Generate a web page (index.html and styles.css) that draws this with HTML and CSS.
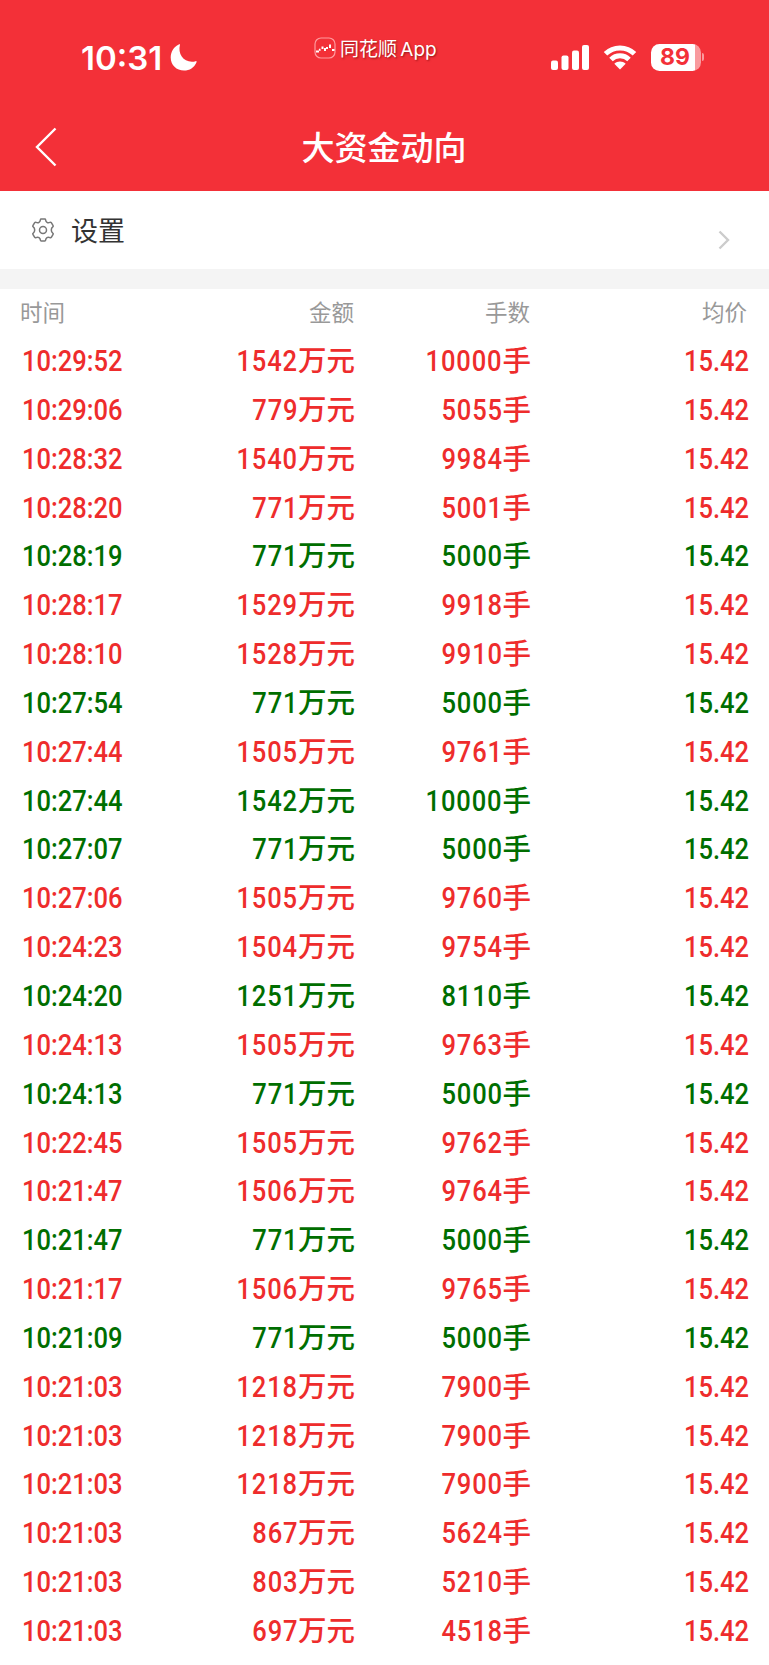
FILE: index.html
```html
<!DOCTYPE html>
<html lang="zh-CN">
<head>
  <meta charset="UTF-8">
  <meta name="viewport" content="width=device-width, initial-scale=1.0">
  <title>大资金动向</title>
  <link rel="stylesheet" href="styles.css">
</head>
<body>
  <header class="header">
    <div class="status-bar">
      <div class="clock">
        <span class="clock-time">10:31</span>
        <svg class="moon" viewBox="0 0 27 27"><path d="M10 0.6C7.5 10 13.5 18.2 22.5 17.8C24.3 17.7 25.6 17.1 26 17C26.8 17 26.7 17.8 26.4 18.4C24.2 23.4 19.6 26.6 14 26.6C6.5 26.6 0.7 21.2 0.7 13.6C0.7 7.6 3.8 2.7 8.8 0.4C9.5 0.1 10.1 0 10 0.6Z"/></svg>
      </div>
      <div class="app-mark">
        <svg class="app-logo" viewBox="0 0 22 22">
          <rect x="1" y="1" width="20" height="20" rx="6"/>
          <path d="M2 14.5h3M5 13l1.5-.5M8.500 9.500v2.500M11 11v3M13 10v2M16 7.500v3.500M18 13h2.500"/>
        </svg>
        <span>同花顺 App</span>
      </div>
      <div class="indicators">
        <svg class="signal" viewBox="0 0 38 25">
          <rect x="0" y="15.5" width="7" height="9.5" rx="2"/>
          <rect x="10.5" y="10.5" width="7" height="14.5" rx="2"/>
          <rect x="21" y="5.5" width="7" height="19.5" rx="2"/>
          <rect x="31" y="0" width="7" height="25" rx="2"/>
        </svg>
        <svg class="wifi" viewBox="0 0 34 25">
          <path d="M2.5 8.8C10.5 0.9 23.5 0.9 31.5 8.8M8 14.5C13 9.6 21 9.6 26 14.5"/>
          <path class="wifi-dot" d="M11.3 18.7C14.5 15.8 19.5 15.8 22.7 18.7L17 24.6Z"/>
        </svg>
        <div class="battery">
          <span class="battery-level">89</span>
        </div>
        <span class="battery-tip"></span>
      </div>
    </div>
    <div class="nav">
      <svg class="back" viewBox="0 0 22 40"><path d="M20.5 1.5L2 20L20.5 38.5"/></svg>
      <h1>大资金动向</h1>
    </div>
  </header>

  <div class="settings">
    <svg class="gear" viewBox="0 0 24 24">
      <path d="M10.2 1h3.600q.7 0 .8.8c.3 2.400 2 3.600 4.300 2.600q.9-.4 1.400.3l1.800 3q.4.7-.3 1.200c-2 1.500-2 4.700 0 6.200q.7.5.3 1.200l-1.800 3q-.5.7-1.400.3c-2.300-1-4 .2-4.300 2.600q-.1.8-.8.8h-3.600q-.7 0-.8-.8c-.3-2.400-2-3.600-4.300-2.600q-.9.4-1.400-.3l-1.800-3q-.4-.7.3-1.200c2-1.500 2-4.700 0-6.200q-.7-.5-.3-1.200l1.800-3q.5-.7 1.400-.3c2.300 1 4-.2 4.300-2.600q.1-.8.8-.8z"/>
      <circle cx="12" cy="12" r="3.5"/>
    </svg>
    <span class="settings-label">设置</span>
    <svg class="arrow" viewBox="0 0 12 20"><path d="M1.5 1.5L10 10L1.5 18.5"/></svg>
  </div>

  <main class="list">
    <div class="row row-head">
      <span>时间</span>
      <span>金额</span>
      <span>手数</span>
      <span>均价</span>
    </div>
    <div id="rows"></div>
  </main>

  <script>
    // time, amount (万元), lots (手), direction
    const trades = [
      ['10:29:52', 1542, 10000, 'buy'],
      ['10:29:06', 779, 5055, 'buy'],
      ['10:28:32', 1540, 9984, 'buy'],
      ['10:28:20', 771, 5001, 'buy'],
      ['10:28:19', 771, 5000, 'sell'],
      ['10:28:17', 1529, 9918, 'buy'],
      ['10:28:10', 1528, 9910, 'buy'],
      ['10:27:54', 771, 5000, 'sell'],
      ['10:27:44', 1505, 9761, 'buy'],
      ['10:27:44', 1542, 10000, 'sell'],
      ['10:27:07', 771, 5000, 'sell'],
      ['10:27:06', 1505, 9760, 'buy'],
      ['10:24:23', 1504, 9754, 'buy'],
      ['10:24:20', 1251, 8110, 'sell'],
      ['10:24:13', 1505, 9763, 'buy'],
      ['10:24:13', 771, 5000, 'sell'],
      ['10:22:45', 1505, 9762, 'buy'],
      ['10:21:47', 1506, 9764, 'buy'],
      ['10:21:47', 771, 5000, 'sell'],
      ['10:21:17', 1506, 9765, 'buy'],
      ['10:21:09', 771, 5000, 'sell'],
      ['10:21:03', 1218, 7900, 'buy'],
      ['10:21:03', 1218, 7900, 'buy'],
      ['10:21:03', 1218, 7900, 'buy'],
      ['10:21:03', 867, 5624, 'buy'],
      ['10:21:03', 803, 5210, 'buy'],
      ['10:21:03', 697, 4518, 'buy']
    ];

    document.getElementById('rows').innerHTML = trades.map(([time, amount, lots, side]) => `
      <div class="row ${side}">
        <span class="time">${time}</span>
        <span><span class="num">${amount}</span><span class="unit">万元</span></span>
        <span><span class="num">${lots}</span><span class="unit">手</span></span>
        <span class="price">15.42</span>
      </div>`).join('');
  </script>
</body>
</html>
```
FILE: styles.css
```css
* {
  box-sizing: border-box;
}
body {
  margin: 0;
  height: 1665px;
  overflow: hidden;
  background: #ffffff;
  font-family: Roboto, "Noto Sans CJK SC", sans-serif;
}
svg {
  display: block;
  flex: none;
  fill: none;
}
.header {
  height: 191px;
  background: #f33038;
  color: #ffffff;
}
.status-bar {
  display: grid;
  grid-template-columns: 314px 1fr 218px;
  height: 105px;
}
.clock {
  display: flex;
  align-items: center;
  height: 40px;
  margin-top: 37px;
  padding-left: 81px;
}
.clock-time {
  width: 89px;
  padding-top: 1px;
  font: 600 33px/40px Inter, sans-serif;
  letter-spacing: 0;
}
.moon {
  width: 27px;
  height: 27px;
  fill: #ffffff;
}
.app-mark {
  display: flex;
  align-items: center;
  gap: 4px;
  height: 30px;
  margin-top: 33px;
  font: 19px/30px Inter, "Noto Sans CJK SC", sans-serif;
  white-space: nowrap;
  word-spacing: -2px;
  text-shadow: 1px 1px 2px rgba(90, 0, 0, 0.6);
}
.app-mark span {
  padding-top: 4px;
}
.app-logo {
  width: 22px;
  height: 22px;
  stroke: #ffffff;
  stroke-width: 2;
}
.app-logo rect {
  stroke: #ff9a9d;
  stroke-width: 1.2;
}
.indicators {
  display: flex;
  align-items: center;
  height: 28px;
  margin-top: 43px;
}
.signal {
  width: 38px;
  height: 25px;
  fill: #ffffff;
}
.wifi {
  width: 34px;
  height: 25px;
  margin: 0 14px;
  stroke: #ffffff;
  stroke-width: 5;
}
.wifi .wifi-dot {
  fill: #ffffff;
  stroke: none;
}
.battery {
  width: 50px;
  height: 27px;
  padding-right: 2px;
  border-radius: 8.5px;
  background: linear-gradient(to right, #ffffff 44px, #f99a9e 44px);
  text-align: center;
}
.battery-level {
  font: 700 23px/27px Inter, sans-serif;
  color: #f33038;
}
.battery-tip {
  width: 2px;
  height: 8px;
  margin-left: 1px;
  border-radius: 0 2px 2px 0;
  background: #f99a9e;
}
.nav {
  display: grid;
  grid-template-columns: 100px 1fr 101px;
  align-items: center;
  height: 86px;
}
.back {
  width: 22px;
  height: 40px;
  margin-left: 35px;
  margin-bottom: 2px;
  stroke: #ffffff;
  stroke-width: 2.4;
}
.nav h1 {
  margin: 0 0 4px;
  font: 500 33px/48px "Noto Sans CJK SC", sans-serif;
  text-align: center;
}
.settings {
  display: flex;
  align-items: center;
  height: 98px;
  padding: 0 39px 20px 31px;
  background: linear-gradient(to top, #f4f4f4 20px, #ffffff 20px);
}
.gear {
  width: 24px;
  height: 24px;
  stroke: #777777;
  stroke-width: 1.5;
  stroke-linejoin: round;
}
.settings-label {
  margin-left: 16px;
  font: 27px/40px "Noto Sans CJK SC", sans-serif;
  color: #333333;
}
.arrow {
  width: 12px;
  height: 20px;
  margin: 19px 0 0 auto;
  stroke: #cccccc;
  stroke-width: 2.4;
}
.row {
  display: grid;
  grid-template-columns: 155px 178px 176px 218px;
  height: 48.85px;
  padding-left: 22px;
  font-size: 29px;
  font-weight: 500;
  line-height: 48px;
  text-align: right;
  white-space: nowrap;
}
.row > span:first-child {
  text-align: left;
}
/* narrow digits */
.time,
.num,
.price {
  display: inline-block;
  transform: scaleX(0.88);
  transform-origin: right;
}
.time {
  transform-origin: left;
}
.num {
  letter-spacing: 1px;
}
.row-head {
  height: 48px;
  padding-left: 20px;
  font: 22.5px/45px "Noto Sans CJK SC", sans-serif;
  color: #999999;
}
.row-head span:nth-child(2),
.row-head span:nth-child(3) {
  margin-right: -1px;
}
.unit {
  font: 500 28.5px/1 "Noto Sans CJK SC", sans-serif;
}
.buy {
  color: #ee2c2c;
}
.sell {
  color: #006e00;
}
```
